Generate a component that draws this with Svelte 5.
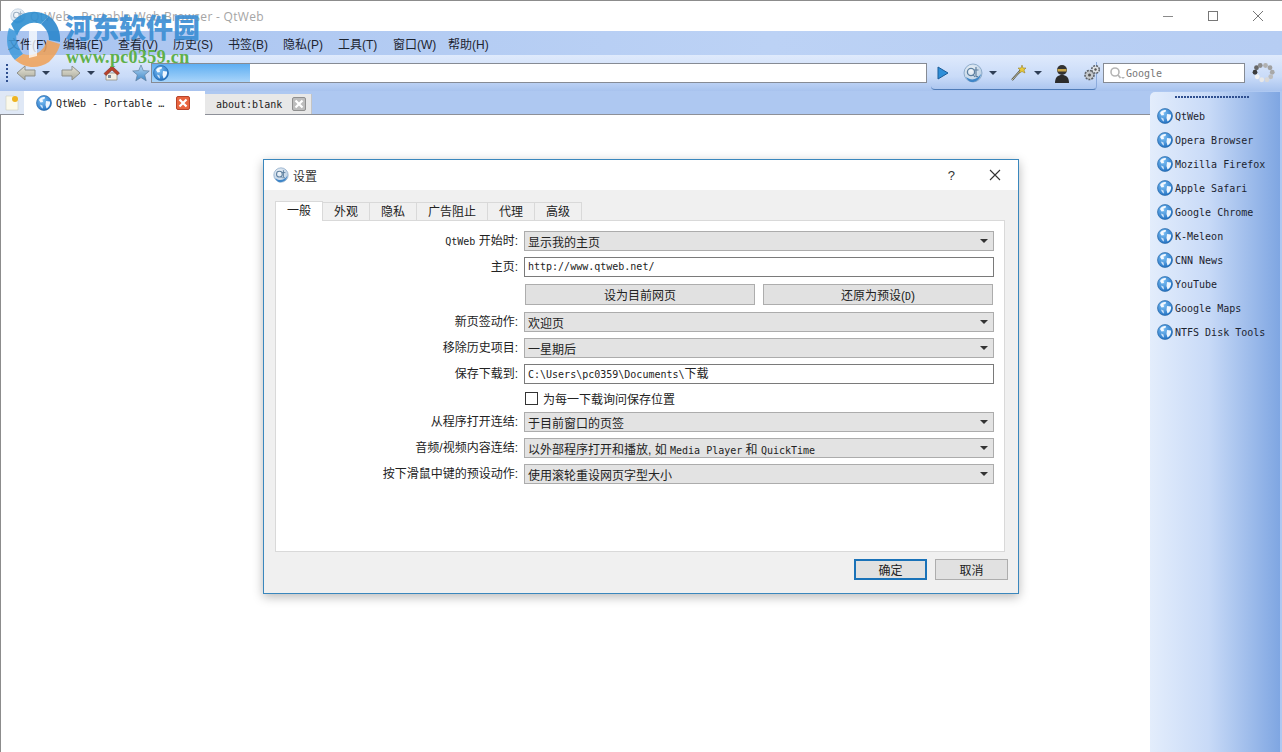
<script>
	let menus = ['文件(F)', '编辑(E)', '查看(V)', '历史(S)', '书签(B)', '隐私(P)', '工具(T)', '窗口(W)', '帮助(H)'];
	let dialogTabs = ['一般', '外观', '隐私', '广告阻止', '代理', '高级'];
	let bookmarks = ['QtWeb', 'Opera Browser', 'Mozilla Firefox', 'Apple Safari', 'Google Chrome', 'K-Meleon', 'CNN News', 'YouTube', 'Google Maps', 'NTFS Disk Tools'];
	let spinnerDots = [
		['#b0b0b0', 18, 5], ['#a0a0a0', 24, 8], ['#a8a8a8', 27, 14], ['#bdbdbd', 25, 20], ['#d8d8d8', 20, 24],
		['#e8e8e8', 13, 24], ['#f2f2f2', 7, 20], ['#3c3c3c', 4, 14], ['#666', 6, 8], ['#8c8c8c', 11, 5]
	];
</script>

{#snippet globe(size)}
	<svg class="icon" width={size} height={size} viewBox="0 0 16 16">
		<circle cx="8" cy="8" r="7.5" fill="url(#globeFill)" stroke="#1f5f9f" stroke-width="0.6" />
		<path d="M3 5 C4 2.5 7 1.5 9 2 L8.5 4 L6.5 4.5 L7 7 L4.5 7.5 Z" fill="#f4f9ff" />
		<path d="M10 6 L14 6.5 C14.5 9 13 12 10.5 13.5 L9.5 10 Z" fill="#eef6ff" />
		<path d="M4 9.5 L6.5 10.5 L7 13.5 C5.5 13 4.5 11.5 4 9.5 Z" fill="#cfe4fa" />
	</svg>
{/snippet}

{#snippet qtIcon(size)}
	<svg class="icon" width={size} height={size} viewBox="0 0 20 20">
		<circle cx="10" cy="10" r="9" fill="url(#qtFill)" stroke="#7f9fc0" stroke-width="0.8" />
		<path d="M3 14 C8 18 14 17 18 11 C17 17 12 19.5 8 19 C6 18.5 4 16.5 3 14 Z" fill="#3f86c8" />
		<circle cx="8" cy="9" r="3.6" fill="none" stroke="#5d7f9f" stroke-width="1.3" />
		<path d="M10 11.5 L12 14 M13 4 L13 13 Q13 14 15 13.5 M11 7 L15.5 7" fill="none" stroke="#5d7f9f" stroke-width="1.2" />
	</svg>
{/snippet}

{#snippet arrow(flip)}
	<svg class="icon" class:flip width="20" height="16" viewBox="0 0 20 16">
		<path d="M1 8 L9 1 L9 5 L19 5 L19 11 L9 11 L9 15 Z" fill="url(#arrowFill)" stroke="#8d8f8a" stroke-width="1" />
	</svg>
{/snippet}

{#snippet caret()}
	<svg class="icon caret" width="8" height="4" viewBox="0 0 8 4"><path d="M0 0 H8 L4 4 Z" fill="#2f3f57" /></svg>
{/snippet}

<div class="window">
	<svg class="defs" width="0" height="0" aria-hidden="true">
		<defs>
			<radialGradient id="globeFill" cx="0.4" cy="0.35" r="0.8">
				<stop offset="0" stop-color="#7cc0f5" />
				<stop offset="1" stop-color="#1262b8" />
			</radialGradient>
			<radialGradient id="qtFill" cx="0.4" cy="0.35" r="0.8">
				<stop offset="0" stop-color="#f2f6fa" />
				<stop offset="1" stop-color="#a9c3dd" />
			</radialGradient>
			<linearGradient id="arrowFill" x1="0" y1="0" x2="0" y2="1">
				<stop offset="0" stop-color="#e9e6d8" />
				<stop offset="1" stop-color="#a8a89a" />
			</linearGradient>
			<linearGradient id="starFill" x1="0" y1="0" x2="0" y2="1">
				<stop offset="0" stop-color="#bcdcf6" />
				<stop offset="1" stop-color="#3d87c8" />
			</linearGradient>
		</defs>
	</svg>

	<header class="titlebar">
		<span class="title-icon">{@render qtIcon(16)}</span>
		<span class="title-text">QtWeb - Portable Web Browser - QtWeb</span>
		<div class="win-buttons">
			<svg width="12" height="12" viewBox="0 0 12 12"><path d="M1 6.5 H11" stroke="#8a8a8a" /></svg>
			<svg width="12" height="12" viewBox="0 0 12 12"><rect x="1.5" y="1.5" width="9" height="9" fill="none" stroke="#777" /></svg>
			<svg width="12" height="12" viewBox="0 0 12 12"><path d="M1 1 L11 11 M11 1 L1 11" stroke="#777" /></svg>
		</div>
	</header>

	<nav class="menubar">
		{#each menus as menu}
			<span class="menu-item">{menu}</span>
		{/each}
	</nav>

	<div class="toolbar">
		<div class="grip"></div>
		<div class="nav-buttons">
			{@render arrow(false)}
			{@render caret()}
			<span class="spacer-a"></span>
			{@render arrow(true)}
			{@render caret()}
			<svg class="icon house" width="18" height="18" viewBox="0 0 18 18">
				<path d="M3 9 V16 H14 V9 Z" fill="#f2efe4" stroke="#8b8570" stroke-width="0.7" />
				<path d="M1 9.5 L9 2 L16.5 9 L14.5 11 L9 6 L3 11.5 Z" fill="#b8412a" stroke="#7a2a1c" stroke-width="0.6" />
				<rect x="5" y="11" width="3" height="3" fill="#7a8a9a" />
			</svg>
			<svg class="icon star" width="18" height="18" viewBox="0 0 18 18">
				<path d="M9 1 L11.3 6.6 L17.3 7 L12.7 10.9 L14.2 16.8 L9 13.6 L3.8 16.8 L5.3 10.9 L0.7 7 L6.7 6.6 Z" fill="url(#starFill)" stroke="#5f7f9f" stroke-width="0.7" />
			</svg>
		</div>
		<div class="address">
			<div class="progress">{@render globe(16)}</div>
		</div>
		<div class="tool-group">
			<svg class="icon" width="12" height="14" viewBox="0 0 12 14"><path d="M1 1 L11 7 L1 13 Z" fill="#2f8fd8" stroke="#1a5c98" /></svg>
			<span class="qt-wrap">{@render qtIcon(20)}</span>
			{@render caret()}
			<svg class="icon wand" width="18" height="18" viewBox="0 0 18 18">
				<path d="M2 16 L11 6" stroke="#4a4a3a" stroke-width="2" />
				<path d="M2 16 L11 6" stroke="#e8e4c8" stroke-width="0.8" />
				<path d="M12 1 L13 4 L16 4 L14 6 L15 9 L12 7.5 L9.5 9 L10 6 L8 4 L11 4 Z" fill="#e8c93a" stroke="#8a7420" stroke-width="0.5" />
			</svg>
			{@render caret()}
			<svg class="icon spy" width="16" height="20" viewBox="0 0 16 20">
				<path d="M1 20 C1 14 4 12 8 12 C12 12 15 14 15 20 Z" fill="#2c2c2c" />
				<circle cx="8" cy="7" r="5" fill="#333" />
				<rect x="3.5" y="6" width="9" height="2.5" fill="#c9a64a" />
			</svg>
			<svg class="icon gears" width="18" height="18" viewBox="0 0 18 18">
				<circle cx="6.5" cy="11" r="4.5" fill="#c4c8cc" stroke="#5d6268" stroke-width="1.6" stroke-dasharray="2 1" />
				<circle cx="6.5" cy="11" r="1.5" fill="#555" />
				<circle cx="12.5" cy="5.5" r="3.8" fill="#dfe2e6" stroke="#5d6268" stroke-width="1.5" stroke-dasharray="2 1" />
				<circle cx="12.5" cy="5.5" r="1.2" fill="#555" />
			</svg>
		</div>
		<div class="search">
			<svg class="icon" width="16" height="14" viewBox="0 0 16 14">
				<circle cx="6" cy="6" r="4" fill="none" stroke="#b5b5b5" stroke-width="1.6" />
				<path d="M9 9 L11.5 12" stroke="#b5b5b5" stroke-width="1.8" />
				<path d="M12 11 H16 L14 13 Z" fill="#b5b5b5" />
			</svg>
			<span>Google</span>
		</div>
		<svg class="spinner" width="24" height="24" viewBox="0 0 32 30">
			{#each spinnerDots as dot}
				<circle cx={dot[1]} cy={dot[2]} r="3.2" fill={dot[0]} />
			{/each}
		</svg>
	</div>

	<div class="workspace">
		<div class="browser">
			<div class="tabbar">
				<div class="new-tab">
					<svg width="14" height="16" viewBox="0 0 14 16">
						<path d="M1 1 H9 L13 5 V15 H1 Z" fill="#fbf9ea" stroke="#cfcfc0" stroke-width="0.6" />
						<circle cx="10" cy="4" r="3" fill="#eeb422" />
					</svg>
				</div>
				<div class="tab active">
					{@render globe(16)}
					<span class="tab-title">QtWeb - Portable …</span>
					<span class="tab-close red">
						<svg width="10" height="10" viewBox="0 0 10 10"><path d="M1.5 1.5 L8.5 8.5 M8.5 1.5 L1.5 8.5" stroke="#fff" stroke-width="2.2" /></svg>
					</span>
				</div>
				<div class="tab">
					<span class="tab-title">about:blank</span>
					<span class="tab-close grey">
						<svg width="10" height="10" viewBox="0 0 10 10"><path d="M1.5 1.5 L8.5 8.5 M8.5 1.5 L1.5 8.5" stroke="#fff" stroke-width="2.2" /></svg>
					</span>
				</div>
			</div>
			<div class="page"></div>
		</div>
		<aside class="sidebar">
			<div class="side-grip"></div>
			<ul>
				{#each bookmarks as bookmark}
					<li>{@render globe(16)}<span>{bookmark}</span></li>
				{/each}
			</ul>
		</aside>
	</div>

	<div class="watermark">
		<svg class="wm-logo" width="60" height="60" viewBox="0 0 60 60">
			<path d="M8 14 A28 28 0 0 1 46 6 L38 14 A18 18 0 0 0 14 26 Z" fill="#2f8fd0" opacity="0.9" />
			<path d="M6 18 C2 30 4 42 12 50 L20 44 C14 36 12 28 14 22 Z" fill="#3f9adb" opacity="0.85" />
			<path d="M12 50 C22 58 34 60 46 52 C52 46 56 40 57 34 L44 30 C42 40 32 48 20 44 Z" fill="#f0a055" opacity="0.85" />
			<path d="M46 6 C54 12 58 22 57 32 L46 30 C46 22 42 18 38 14 Z" fill="#2b86cc" opacity="0.9" />
			<path d="M26 20 L34 16 V46 L26 48 Z" fill="#fff" opacity="0.75" />
		</svg>
		<span class="wm-cn">河东软件园</span>
		<span class="wm-url">www.pc0359.cn</span>
	</div>

	<section class="dialog">
		<div class="dialog-title">
			{@render qtIcon(16)}
			<span>设置</span>
			<div class="dialog-buttons">
				<span class="help">?</span>
				<svg width="12" height="12" viewBox="0 0 12 12"><path d="M1 1 L11 11 M11 1 L1 11" stroke="#333" stroke-width="1.1" /></svg>
			</div>
		</div>
		<div class="dialog-body">
			<div class="dialog-tabs">
				{#each dialogTabs as tab, i}
					<span class="dtab" class:current={i === 0}>{tab}</span>
				{/each}
			</div>
			<div class="pane">
				<div class="form">
					<span class="label"><span class="mono">QtWeb</span> 开始时:</span>
					<div class="combo"><span>显示我的主页</span><i></i></div>

					<span class="label">主页:</span>
					<div class="input mono">http://www.qtweb.net/</div>

					<span></span>
					<div class="button-pair">
						<button>设为目前网页</button>
						<button>还原为预设(<span class="mono">D</span>)</button>
					</div>

					<span class="label">新页签动作:</span>
					<div class="combo"><span>欢迎页</span><i></i></div>

					<span class="label">移除历史项目:</span>
					<div class="combo"><span>一星期后</span><i></i></div>

					<span class="label">保存下载到:</span>
					<div class="input"><span class="mono">C:\Users\pc0359\Documents\</span>下载</div>

					<span></span>
					<label class="check"><b></b>为每一下载询问保存位置</label>

					<span class="label">从程序打开连结:</span>
					<div class="combo"><span>于目前窗口的页签</span><i></i></div>

					<span class="label">音频/视频内容连结:</span>
					<div class="combo"><span>以外部程序打开和播放, 如 <span class="mono">Media Player</span> 和 <span class="mono">QuickTime</span></span><i></i></div>

					<span class="label">按下滑鼠中键的预设动作:</span>
					<div class="combo"><span>使用滚轮重设网页字型大小</span><i></i></div>
				</div>
			</div>
			<div class="dialog-actions">
				<button class="primary">确定</button>
				<button>取消</button>
			</div>
		</div>
	</section>
</div>

<style>
	:global(body) {
		margin: 0;
		background: #fff;
	}

	.window {
		position: relative;
		width: 1282px;
		height: 752px;
		overflow: hidden;
		box-sizing: border-box;
		border-top: 1px solid #8c8c8c;
		font-family: "Liberation Sans", "Noto Sans CJK SC", sans-serif;
		font-size: 12px;
		color: #222;
		display: flex;
		flex-direction: column;
	}

	.defs {
		position: absolute;
	}

	.icon {
		display: block;
		flex: none;
	}

	.flip {
		transform: scaleX(-1);
	}

	.mono {
		font-family: "DejaVu Sans Mono", "Noto Sans CJK SC", monospace;
		font-size: 10px;
	}

	.titlebar {
		height: 30px;
		flex: none;
		display: flex;
		align-items: center;
		padding-left: 9px;
		background: #fff;
		border-left: 1px solid #8c8c8c;
	}

	.title-icon {
		opacity: 0.6;
		margin-right: 4px;
	}

	.title-text {
		font-family: "Open Sans", sans-serif;
		font-size: 12px;
		color: #a5a5a5;
		letter-spacing: 0.3px;
	}

	.win-buttons {
		margin-left: auto;
		display: flex;
		gap: 33px;
		padding-right: 18px;
	}

	.menubar {
		height: 24px;
		flex: none;
		display: flex;
		align-items: center;
		gap: 16px;
		padding-left: 8px;
		background: linear-gradient(90deg, #a9c4f0, #bcd2f5 60%, #b6cdf3);
	}

	.menu-item {
		width: 39px;
		white-space: nowrap;
		color: #1d2430;
	}

	.toolbar {
		height: 36px;
		flex: none;
		display: flex;
		align-items: center;
		background: linear-gradient(180deg, #dfeafc, #c9dbf8 60%, #a8c3ee);
		padding-left: 6px;
	}

	.grip {
		width: 2px;
		height: 18px;
		margin-right: 8px;
		background: repeating-linear-gradient(180deg, #2f4f8f 0 2px, transparent 2px 4px);
	}

	.nav-buttons {
		display: flex;
		align-items: center;
		width: 135px;
		flex: none;
	}

	.caret {
		margin-left: 6px;
	}

	.spacer-a {
		width: 11px;
	}

	.house {
		margin-left: 8px;
	}

	.star {
		margin-left: 11px;
	}

	.address {
		width: 776px;
		height: 20px;
		flex: none;
		box-sizing: border-box;
		border: 1px solid #868b94;
		background: #fff;
	}

	.progress {
		width: 98px;
		height: 18px;
		display: flex;
		align-items: center;
		background: linear-gradient(180deg, #5eaef2, #a8d4fa);
		padding-left: 1px;
		box-sizing: border-box;
	}

	.tool-group {
		width: 166px;
		height: 28px;
		margin: 5px 0 0 4px;
		flex: none;
		display: flex;
		align-items: center;
		box-sizing: border-box;
		padding: 0 0 5px 6px;
		border-bottom: 1px solid #4f7cb8;
		border-right: 1px solid #8cabdc;
		border-radius: 0 0 4px 4px;
	}

	.qt-wrap {
		margin-left: 14px;
	}

	.wand {
		margin-left: 13px;
	}

	.spy {
		margin-left: 12px;
	}

	.gears {
		margin-left: 13px;
	}

	.search {
		width: 142px;
		height: 20px;
		margin-left: 6px;
		flex: none;
		display: flex;
		align-items: center;
		gap: 1px;
		box-sizing: border-box;
		border: 1px solid #868b94;
		background: #fff;
		padding-left: 5px;
		font-family: "DejaVu Sans Mono", monospace;
		font-size: 10px;
		color: #777;
	}

	.spinner {
		margin-left: 7px;
	}

	.workspace {
		flex: 1;
		display: flex;
		min-height: 0;
		background: #aec8f1;
	}

	.browser {
		flex: 1;
		display: flex;
		flex-direction: column;
		min-width: 0;
	}

	.tabbar {
		height: 24px;
		flex: none;
		display: flex;
		align-items: flex-end;
		background: #aec8f1;
		border-bottom: 1px solid #8d9098;
		box-sizing: border-box;
	}

	.new-tab {
		width: 24px;
		height: 23px;
		display: flex;
		align-items: center;
		justify-content: center;
		background: #dfe8f6;
	}

	.tab {
		height: 20px;
		display: flex;
		align-items: center;
		margin-right: 0;
		padding: 0 5px 0 11px;
		background: #e8e8e8;
		border-right: 1px solid #c4c4c4;
		box-sizing: border-box;
		font-family: "DejaVu Sans Mono", monospace;
		font-size: 10px;
		width: 107px;
		justify-content: space-between;
	}

	.tab.active {
		width: 181px;
		height: 24px;
		margin-bottom: -1px;
		background: #fff;
		border: none;
		padding: 0 15px 0 12px;
		gap: 4px;
	}

	.tab-title {
		white-space: nowrap;
		flex: 1;
	}

	.tab-close {
		width: 14px;
		height: 14px;
		display: flex;
		align-items: center;
		justify-content: center;
		border-radius: 2px;
		flex: none;
		box-sizing: border-box;
	}

	.tab-close.red {
		background: #e9653f;
		border: 1px solid #b8432a;
	}

	.tab-close.grey {
		background: #bdbdbd;
		border: 1px solid #8f8f8f;
	}

	.page {
		flex: 1;
		background: #fff;
		border-left: 1px solid #8c8c8c;
	}

	.sidebar {
		width: 130px;
		margin: 1px 2px 0 0;
		flex: none;
		background: linear-gradient(90deg, #e3edfc, #c8daf7 45%, #7fa6e2);
		border-radius: 5px 0 0 0;
	}

	.side-grip {
		width: 75px;
		height: 2px;
		margin: 4px 0 0 25px;
		background: repeating-linear-gradient(90deg, #2f4f8f 0 2px, transparent 2px 3px);
	}

	.sidebar ul {
		list-style: none;
		margin: 8px 0 0;
		padding: 0 0 0 7px;
		display: flex;
		flex-direction: column;
		gap: 4px;
	}

	.sidebar li {
		height: 20px;
		display: flex;
		align-items: center;
		gap: 2px;
		font-family: "DejaVu Sans Mono", monospace;
		font-size: 10px;
		color: #1c2430;
		white-space: nowrap;
	}

	.watermark {
		position: absolute;
		left: 0;
		top: 0;
		width: 210px;
		height: 70px;
		pointer-events: none;
	}

	.wm-logo {
		position: absolute;
		left: 3px;
		top: 9px;
	}

	.wm-cn {
		position: absolute;
		left: 65px;
		top: 8px;
		font-family: "Noto Sans CJK SC", sans-serif;
		font-weight: 900;
		font-size: 27px;
		line-height: 36px;
		color: #3d8fd4;
		white-space: nowrap;
		opacity: 0.92;
	}

	.wm-url {
		position: absolute;
		left: 66px;
		top: 46px;
		font-family: "Liberation Serif", serif;
		font-weight: 700;
		font-size: 18px;
		line-height: 20px;
		letter-spacing: 0.35px;
		color: #5fb04a;
		white-space: nowrap;
	}

	.dialog {
		position: absolute;
		left: 263px;
		top: 158px;
		width: 756px;
		height: 435px;
		box-sizing: border-box;
		border: 1px solid #3a87bd;
		box-shadow: 0 3px 10px rgba(0, 0, 0, 0.28);
		display: flex;
		flex-direction: column;
		background: #f0f0f0;
	}

	.dialog-title {
		height: 30px;
		flex: none;
		display: flex;
		align-items: center;
		gap: 4px;
		padding-left: 9px;
		background: #fff;
		color: #333;
	}

	.dialog-buttons {
		margin-left: auto;
		display: flex;
		align-items: center;
		gap: 34px;
		padding-right: 17px;
	}

	.help {
		font-size: 13px;
	}

	.dialog-body {
		flex: 1;
		padding: 12px 11px 0 11px;
		min-height: 0;
	}

	.dialog-tabs {
		display: flex;
		height: 18px;
	}

	.dtab {
		padding: 0 11px;
		height: 18px;
		line-height: 19px;
		background: #f0f0f0;
		border: 1px solid #d9d9d9;
		border-left: none;
		border-bottom: none;
		box-sizing: border-box;
		color: #222;
	}

	.dtab.current {
		background: #fff;
		height: 20px;
		border-left: 1px solid #d9d9d9;
		z-index: 1;
		padding: 0 11px;
		margin-bottom: -2px;
		position: relative;
		top: -1px;
	}

	.pane {
		width: 730px;
		height: 332px;
		box-sizing: border-box;
		background: #fff;
		border: 1px solid #d9d9d9;
		padding: 10px 10px 0 0;
	}

	.form {
		display: grid;
		grid-template-columns: 242px 470px;
		grid-template-rows: 20px 20px 23px 20px 20px 20px 16px 20px 20px 20px;
		column-gap: 6px;
		row-gap: 6px;
	}

	.label {
		text-align: right;
		line-height: 20px;
		white-space: nowrap;
	}

	.combo {
		display: flex;
		align-items: center;
		justify-content: space-between;
		box-sizing: border-box;
		border: 1px solid #acacac;
		background: #e3e3e3;
		padding: 0 5px 0 3px;
		white-space: nowrap;
	}

	.combo i {
		width: 0;
		height: 0;
		border-left: 4px solid transparent;
		border-right: 4px solid transparent;
		border-top: 4px solid #333;
	}

	.input {
		box-sizing: border-box;
		border: 1px solid #7a7a7a;
		background: #fff;
		padding: 0 3px;
		line-height: 18px;
		white-space: nowrap;
	}

	.button-pair {
		display: flex;
		gap: 8px;
		padding: 0 1px;
	}

	button {
		font: inherit;
		color: #222;
		padding: 0;
		box-sizing: border-box;
		background: #e1e1e1;
		border: 1px solid #adadad;
	}

	.button-pair button {
		width: 230px;
		height: 21px;
		margin-top: 1px;
	}

	.check {
		display: flex;
		align-items: center;
		gap: 5px;
		padding-left: 1px;
	}

	.check b {
		width: 13px;
		height: 13px;
		box-sizing: border-box;
		border: 1px solid #333;
		background: #fff;
	}

	.dialog-actions {
		display: flex;
		justify-content: flex-end;
		gap: 8px;
		margin-top: 7px;
		margin-right: -1px;
	}

	.dialog-actions button {
		width: 73px;
		height: 21px;
	}

	.dialog-actions .primary {
		border: 2px solid #1a72b8;
	}
</style>
